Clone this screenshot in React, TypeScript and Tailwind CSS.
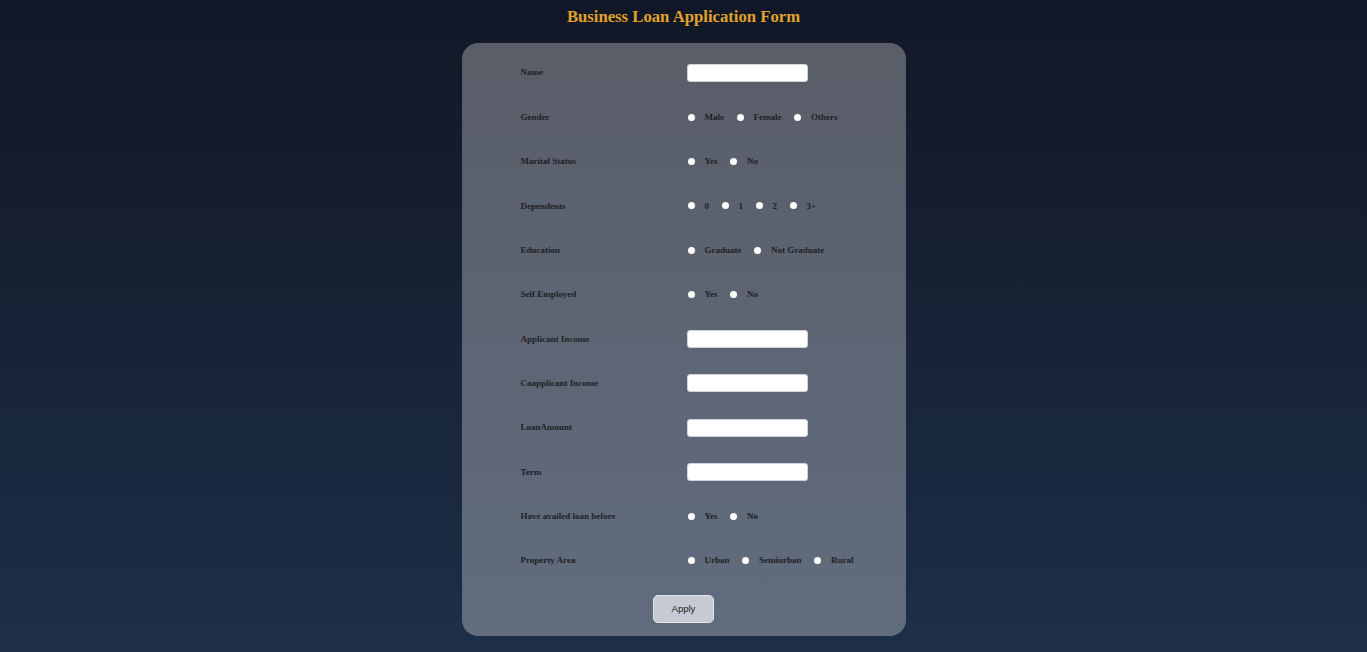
import React from "react";

type Row =
  | { label: string; kind: "input" }
  | { label: string; kind: "radio"; options: string[] };

const rows: Row[] = [
  { label: "Name", kind: "input" },
  { label: "Gender", kind: "radio", options: ["Male", "Female", "Others"] },
  { label: "Marital Status", kind: "radio", options: ["Yes", "No"] },
  { label: "Dependents", kind: "radio", options: ["0", "1", "2", "3+"] },
  { label: "Education", kind: "radio", options: ["Graduate", "Not Graduate"] },
  { label: "Self Employed", kind: "radio", options: ["Yes", "No"] },
  { label: "Applicant Income", kind: "input" },
  { label: "Coapplicant Income", kind: "input" },
  { label: "LoanAmount", kind: "input" },
  { label: "Term", kind: "input" },
  { label: "Have availed loan before", kind: "radio", options: ["Yes", "No"] },
  { label: "Property Area", kind: "radio", options: ["Urban", "Semiurban", "Rural"] },
];

export default function App() {
  return (
    <div
      className="min-h-screen bg-gradient-to-b from-[#111726] to-[#1d2f48] pb-[16px]"
      style={{ fontFamily: '"Liberation Serif", "Times New Roman", serif' }}
    >
      <h1 className="pt-[6px] pb-[15px] text-center text-[16.7px] font-bold leading-[22px] text-[#e0a22a]">
        Business Loan Application Form
      </h1>
      <div className="mx-auto w-[444px] rounded-2xl bg-white/30 pt-[7.5px] pb-[13px]">
        <div className="flex flex-col">
          {rows.map((r, i) => (
            <div key={i} className="flex h-[44.36px] items-center">
              <div className="w-[225px] pl-[59px] pt-[1px] text-[9px] font-bold text-[#1e2024]">
                {r.label}
              </div>
              <div className="flex items-center">
                {r.kind === "input" ? (
                  <input
                    type="text"
                    className="h-[18px] w-[121px] rounded-[3px] border border-[#cfd2d8] bg-white outline-none"
                  />
                ) : (
                  <div className="flex items-center">
                    {r.options.map((o, j) => (
                      <div
                        key={j}
                        className={`flex items-center ${j > 0 ? "ml-[12.5px]" : "ml-[1px]"}`}
                      >
                        <span className="h-[7px] w-[7px] rounded-full bg-white" />
                        <span className="ml-[10px] pt-[1px] text-[9px] font-bold text-[#1e2024]">
                          {o}
                        </span>
                      </div>
                    ))}
                  </div>
                )}
              </div>
            </div>
          ))}
        </div>
        <button
          className="mx-auto mt-[12.5px] block h-[28px] w-[61px] rounded-[5px] border border-[#e4e6ea] bg-[#c6cad2] text-[9.5px] text-[#222]"
          style={{ fontFamily: '"Liberation Sans", Arial, sans-serif' }}
        >
          Apply
        </button>
      </div>
    </div>
  );
}
